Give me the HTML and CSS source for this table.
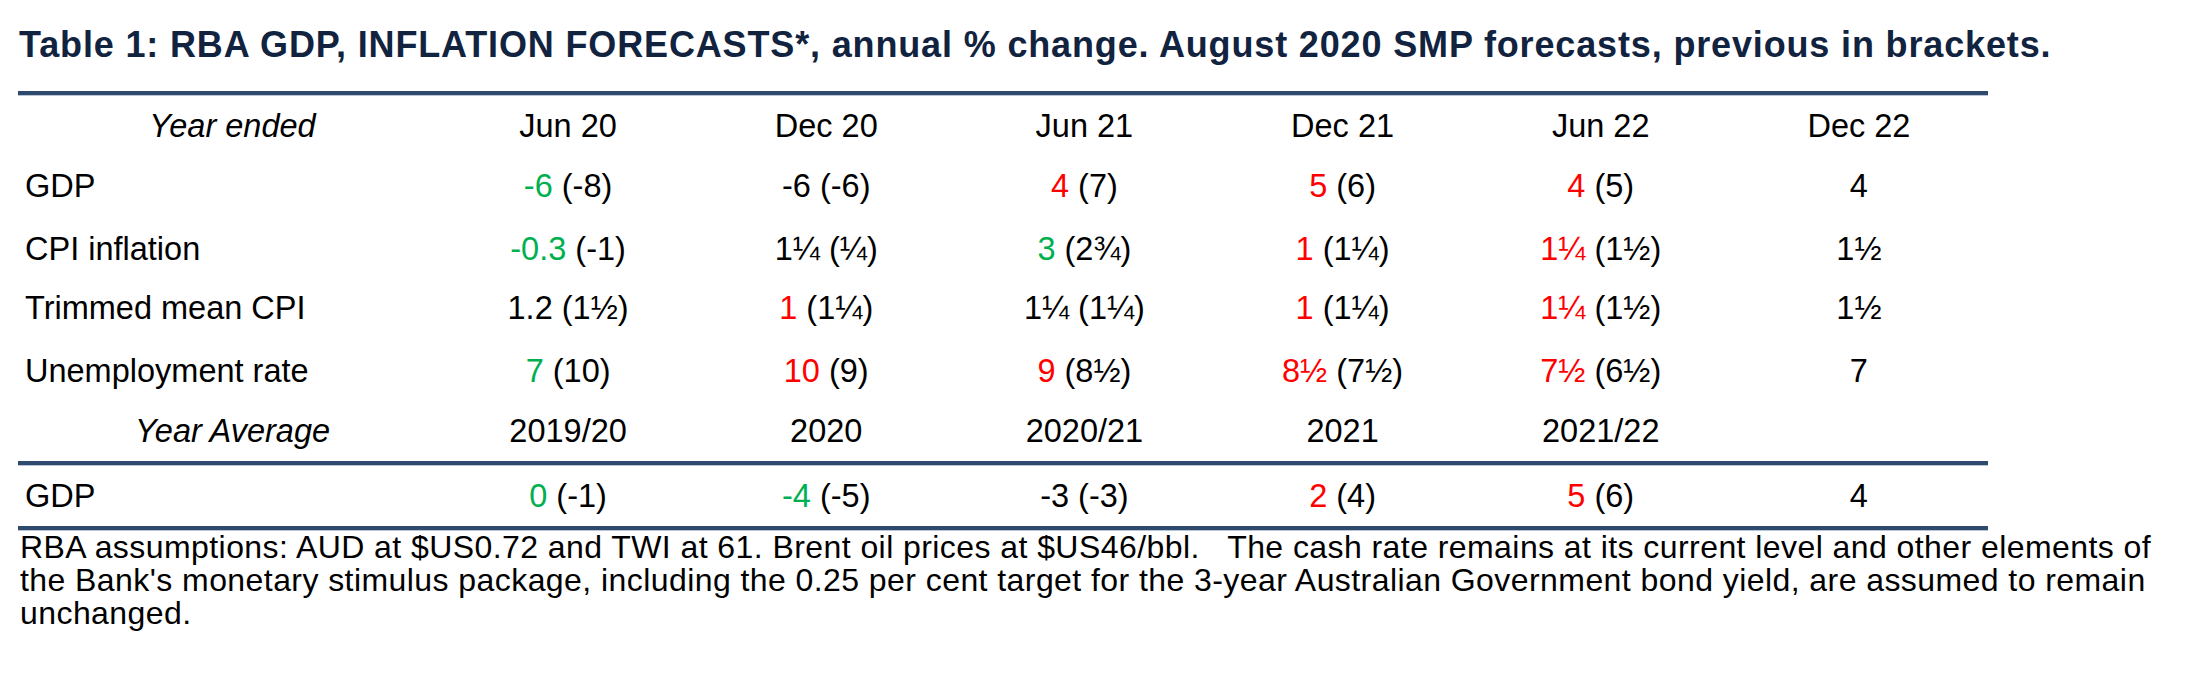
FILE: index.html
```html
<!DOCTYPE html>
<html>
<head>
<meta charset="utf-8">
<link rel="stylesheet" href="styles.css">
</head>
<body>
<div class="page">
  <h1 class="title">Table 1: RBA GDP, INFLATION FORECASTS*, annual % change. August 2020 SMP forecasts, previous in brackets.</h1>
  <div class="tbl">
    <div class="rule"></div>
    <div class="row r-head">
      <div class="cell label center it">Year ended</div>
      <div class="cell">Jun 20</div><div class="cell">Dec 20</div><div class="cell">Jun 21</div>
      <div class="cell">Dec 21</div><div class="cell">Jun 22</div><div class="cell">Dec 22</div>
    </div>
    <div class="row r-gdp">
      <div class="cell label">GDP</div>
      <div class="cell"><span class="g">-6</span> (-8)</div>
      <div class="cell">-6 (-6)</div>
      <div class="cell"><span class="r">4</span> (7)</div>
      <div class="cell"><span class="r">5</span> (6)</div>
      <div class="cell"><span class="r">4</span> (5)</div>
      <div class="cell">4</div>
    </div>
    <div class="row r-cpi">
      <div class="cell label">CPI inflation</div>
      <div class="cell"><span class="g">-0.3</span> (-1)</div>
      <div class="cell">1¼ (¼)</div>
      <div class="cell"><span class="g">3</span> (2¾)</div>
      <div class="cell"><span class="r">1</span> (1¼)</div>
      <div class="cell"><span class="r">1¼</span> (1½)</div>
      <div class="cell">1½</div>
    </div>
    <div class="row r-trim">
      <div class="cell label">Trimmed mean CPI</div>
      <div class="cell">1.2 (1½)</div>
      <div class="cell"><span class="r">1</span> (1¼)</div>
      <div class="cell">1¼ (1¼)</div>
      <div class="cell"><span class="r">1</span> (1¼)</div>
      <div class="cell"><span class="r">1¼</span> (1½)</div>
      <div class="cell">1½</div>
    </div>
    <div class="row r-unemp">
      <div class="cell label">Unemployment rate</div>
      <div class="cell"><span class="g">7</span> (10)</div>
      <div class="cell"><span class="r">10</span> (9)</div>
      <div class="cell"><span class="r">9</span> (8½)</div>
      <div class="cell"><span class="r">8½</span> (7½)</div>
      <div class="cell"><span class="r">7½</span> (6½)</div>
      <div class="cell">7</div>
    </div>
    <div class="row r-avg">
      <div class="cell label center it">Year Average</div>
      <div class="cell">2019/20</div><div class="cell">2020</div><div class="cell">2020/21</div>
      <div class="cell">2021</div><div class="cell">2021/22</div><div class="cell"></div>
    </div>
    <div class="rule"></div>
    <div class="row r-gdp2">
      <div class="cell label">GDP</div>
      <div class="cell"><span class="g">0</span> (-1)</div>
      <div class="cell"><span class="g">-4</span> (-5)</div>
      <div class="cell">-3 (-3)</div>
      <div class="cell"><span class="r">2</span> (4)</div>
      <div class="cell"><span class="r">5</span> (6)</div>
      <div class="cell">4</div>
    </div>
    <div class="rule"></div>
  </div>
  <p class="note">RBA assumptions: AUD at $US0.72 and TWI at 61. Brent oil prices at $US46/bbl.&nbsp;&nbsp; The cash rate remains at its current level and other elements of<br>the Bank's monetary stimulus package, including the 0.25 per cent target for the 3-year Australian Government bond yield, are assumed to remain<br>unchanged.</p>
</div>
</body>
</html>
```
FILE: styles.css
```css
html, body {
  margin: 0;
  padding: 0;
  background: #ffffff;
}
body {
  font-family: "Liberation Sans", Arial, sans-serif;
  color: #000000;
}
.page {
  width: 2205px;
  height: 675px;
  overflow: hidden;
}
.title {
  margin: 25px 0 0 19px;
  font-size: 36px;
  letter-spacing: 0.85px;
  line-height: 40px;
  font-weight: bold;
  color: #12233f;
  white-space: nowrap;
}
.tbl {
  margin: 26px 0 0 18px;
  width: 1970px;
}
.rule {
  height: 4px;
  background: #2e4a6e;
  border-bottom: 1px solid #b9c5d5;
}
.row {
  display: grid;
  grid-template-columns: 421px repeat(6, 1fr);
  font-size: 32.5px;
}
.cell {
  text-align: center;
  white-space: nowrap;
}
.label {
  text-align: left;
  padding-left: 7px;
}
.label.center {
  text-align: center;
  padding-left: 8px;
}
.it {
  font-style: italic;
}
.r-head { height: 60px; line-height: 60px; }
.r-gdp { height: 62px; line-height: 60px; }
.r-cpi { height: 60px; line-height: 62px; }
.r-trim { height: 63px; line-height: 60px; }
.r-unemp { height: 60px; line-height: 60px; }
.r-avg { height: 60px; line-height: 60px; }
.r-gdp2 { height: 60px; line-height: 60px; }
.g { color: #00b050; }
.r { color: #ff0000; }
.note {
  margin: 0 0 0 20px;
  font-size: 32px;
  letter-spacing: 0.43px;
  line-height: 33px;
  white-space: nowrap;
}
```
